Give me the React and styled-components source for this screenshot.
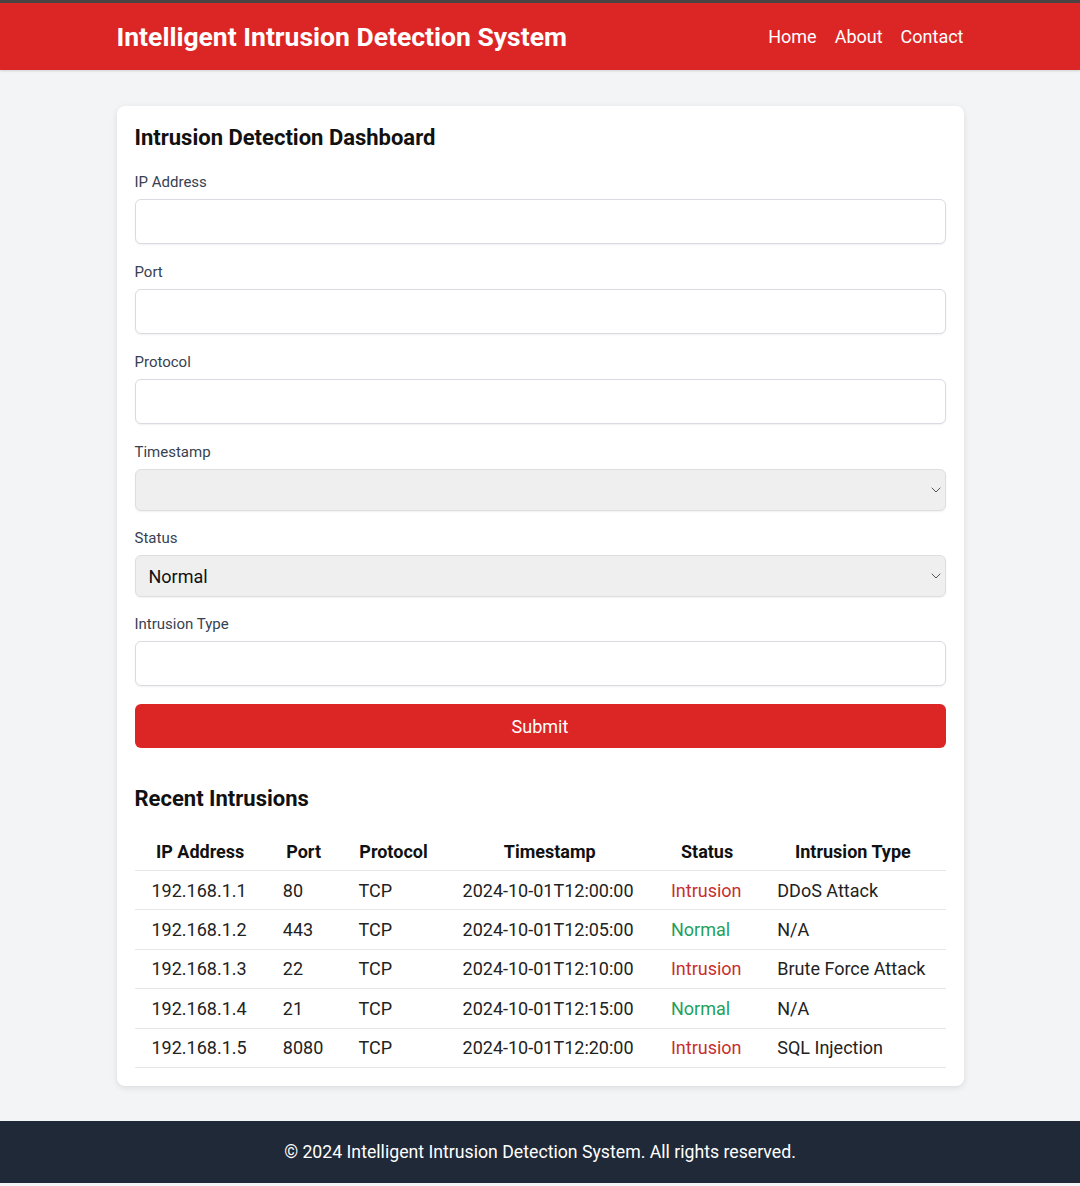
import React from 'react';
import styled, { createGlobalStyle } from 'styled-components';
import { ChevronDown } from 'lucide-react';

const GlobalStyle = createGlobalStyle`
    body {
        margin: 0;
        background: #f3f4f6;
        font-family: Roboto, "Liberation Sans", sans-serif;
        color: #111;
    }
`

const rows = [
    { ip: '192.168.1.1', port: '80', protocol: 'TCP', time: '2024-10-01T12:00:00', status: 'Intrusion', type: 'DDoS Attack' },
    { ip: '192.168.1.2', port: '443', protocol: 'TCP', time: '2024-10-01T12:05:00', status: 'Normal', type: 'N/A' },
    { ip: '192.168.1.3', port: '22', protocol: 'TCP', time: '2024-10-01T12:10:00', status: 'Intrusion', type: 'Brute Force Attack' },
    { ip: '192.168.1.4', port: '21', protocol: 'TCP', time: '2024-10-01T12:15:00', status: 'Normal', type: 'N/A' },
    { ip: '192.168.1.5', port: '8080', protocol: 'TCP', time: '2024-10-01T12:20:00', status: 'Intrusion', type: 'SQL Injection' },
];

function App() {
    return (
        <Page>
            <GlobalStyle />
            <Header>
                <Container>
                    <Brand>Intelligent Intrusion Detection System</Brand>
                    <Nav>
                        <NavLink>Home</NavLink>
                        <NavLink>About</NavLink>
                        <NavLink>Contact</NavLink>
                    </Nav>
                </Container>
            </Header>
            <Main>
                <Card>
                    <Title>Intrusion Detection Dashboard</Title>
                    <Field>
                        <Label>IP Address</Label>
                        <Input type="text" />
                    </Field>
                    <Field>
                        <Label>Port</Label>
                        <Input type="text" />
                    </Field>
                    <Field>
                        <Label>Protocol</Label>
                        <Input type="text" />
                    </Field>
                    <Field tight>
                        <Label>Timestamp</Label>
                        <SelectWrap>
                            <Select defaultValue="">
                                <option value=""></option>
                            </Select>
                            <Chevron><ChevronDown size={16} strokeWidth={1.5} /></Chevron>
                        </SelectWrap>
                    </Field>
                    <Field tight>
                        <Label>Status</Label>
                        <SelectWrap>
                            <Select defaultValue="Normal">
                                <option>Normal</option>
                                <option>Intrusion</option>
                            </Select>
                            <Chevron><ChevronDown size={16} strokeWidth={1.5} /></Chevron>
                        </SelectWrap>
                    </Field>
                    <Field>
                        <Label>Intrusion Type</Label>
                        <Input type="text" />
                    </Field>
                    <SubmitButton>Submit</SubmitButton>

                    <SubTitle>Recent Intrusions</SubTitle>
                    <Table>
                        <thead>
                            <tr>
                                <Th>IP Address</Th>
                                <Th>Port</Th>
                                <Th>Protocol</Th>
                                <Th>Timestamp</Th>
                                <Th>Status</Th>
                                <Th>Intrusion Type</Th>
                            </tr>
                        </thead>
                        <tbody>
                            {rows.map((r) => (
                                <tr key={r.ip}>
                                    <Td>{r.ip}</Td>
                                    <Td>{r.port}</Td>
                                    <Td>{r.protocol}</Td>
                                    <Td>{r.time}</Td>
                                    <StatusCell $intrusion={r.status === 'Intrusion'}>{r.status}</StatusCell>
                                    <Td>{r.type}</Td>
                                </tr>
                            ))}
                        </tbody>
                    </Table>
                </Card>
            </Main>
            <Footer>© 2024 Intelligent Intrusion Detection System. All rights reserved.</Footer>
        </Page>
    );
}

export default App;

const Page = styled.div`
    min-height: 1186px;
    background: #f3f4f6;
`

const Header = styled.header`
    background: #dc2626;
    border-top: 3px solid #4a4343;
    height: 67px;
    display: flex;
    align-items: center;
    box-shadow: 0 1px 2px rgba(0,0,0,0.15);
`

const Container = styled.div`
    width: 847px;
    margin: 0 auto;
    display: flex;
    align-items: center;
    justify-content: space-between;
`

const Brand = styled.h1`
    margin: 0;
    color: #fff;
    font-size: 26.5px;
    font-weight: 700;
`

const Nav = styled.nav`
    display: flex;
    gap: 18px;
`

const NavLink = styled.a`
    color: #fff;
    font-size: 18px;
    cursor: pointer;
`

const Main = styled.main`
    padding: 36px 0 35px;
`

const Card = styled.div`
    width: 811px;
    margin: 0 auto;
    background: #fff;
    border-radius: 8px;
    padding: 18px;
    box-shadow: 0 2px 6px rgba(0,0,0,0.1);
`

const Title = styled.h2`
    margin: 0 0 20px;
    font-size: 22px;
    line-height: 28px;
    font-weight: 700;
`

const Field = styled.div`
    display: flex;
    flex-direction: column;
    margin-bottom: ${(p) => (p.tight ? '17px' : '18px')};
`

const Label = styled.label`
    font-size: 15px;
    line-height: 20px;
    color: #374151;
    margin-bottom: 7px;
`

const Input = styled.input`
    box-sizing: border-box;
    height: 45px;
    width: 100%;
    border: 1px solid #d9dbe0;
    border-radius: 6px;
    background: #fff;
    box-shadow: 0 1px 2px rgba(0,0,0,0.06);
    font: inherit;
    font-size: 18px;
    padding: 0 13px;
`

const SelectWrap = styled.div`
    position: relative;
`

const Select = styled.select`
    box-sizing: border-box;
    appearance: none;
    width: 100%;
    height: 42px;
    border: 1px solid #dedede;
    border-radius: 6px;
    background: #efefef;
    box-shadow: 0 1px 2px rgba(0,0,0,0.06);
    font-family: Roboto, "Liberation Sans", sans-serif;
    font-size: 18px;
    color: #111;
    padding: 0 13px;
`

const Chevron = styled.span`
    position: absolute;
    right: 2px;
    top: 50%;
    transform: translateY(-50%);
    display: flex;
    color: #555;
    pointer-events: none;
`

const SubmitButton = styled.button`
    display: block;
    width: 100%;
    height: 44px;
    border: none;
    border-radius: 6px;
    background: #dc2626;
    color: #fff;
    font-family: Roboto, "Liberation Sans", sans-serif;
    font-size: 18px;
    cursor: pointer;
`

const SubTitle = styled.h3`
    margin: 37px 0 19px;
    font-size: 22px;
    line-height: 28px;
    font-weight: 700;
`

const Table = styled.table`
    width: 100%;
    border-collapse: collapse;
    font-size: 18px;
    tr {
        border-bottom: 1px solid #e5e7eb;
    }
`

const Th = styled.th`
    font-weight: 700;
    height: 38px;
    padding: 0 17px;
    text-align: center;
`

const Td = styled.td`
    height: 38.4px;
    padding: 0 17px;
    text-align: left;
    color: #222;
`

const StatusCell = styled(Td)`
    color: ${(p) => (p.$intrusion ? '#c53030' : '#23a05a')};
`

const Footer = styled.footer`
    background: #1f2937;
    color: #fff;
    height: 62px;
    display: flex;
    align-items: center;
    justify-content: center;
    font-size: 17.7px;
`
